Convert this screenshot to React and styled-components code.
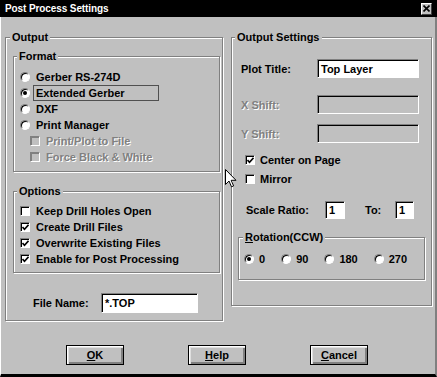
import React from 'react'
import styled, { createGlobalStyle } from 'styled-components'

const GlobalStyle = createGlobalStyle`
  html, body {
    margin: 0;
    padding: 0;
    background: #c0c0c0;
  }
`

const Window = styled.div`
  position: relative;
  width: 437px;
  height: 377px;
  box-sizing: border-box;
  display: flex;
  flex-direction: column;
  background: #c0c0c0;
  font-family: "Liberation Sans", Arial, sans-serif;
  font-weight: bold;
  font-size: 11px;
  color: #000;
  overflow: hidden;
`

const TitleBar = styled.div`
  height: 17px;
  flex-shrink: 0;
  display: flex;
  align-items: center;
  justify-content: space-between;
  padding: 0 5px 0 5px;
  background: #000;
  color: #fff;
  font-size: 10px;
  letter-spacing: -0.1px;
`

const CloseButton = styled.div`
  width: 11px;
  height: 12px;
  box-sizing: border-box;
  display: flex;
  align-items: center;
  justify-content: center;
  background: #c0c0c0;
  border: 1px solid;
  border-color: #fff #404040 #404040 #fff;
`

const Body = styled.div`
  flex: 1;
  display: flex;
  flex-direction: column;
  padding: 20px 0 0 4px;
  border-left: 1px solid #fff;
  border-right: 2px solid #808080;
  border-bottom: 3px solid #000;
`

const Columns = styled.div`
  display: flex;
  align-items: flex-start;
  gap: 8px;
`

const Group = styled.div`
  display: flex;
  flex-direction: column;
  box-sizing: border-box;
  width: ${p => p.$w}px;
  height: ${p => p.$h}px;
  margin: ${p => p.$m || '0'};
  border: 1px solid #808080;
  box-shadow: inset 1px 1px 0 #fff, 1px 1px 0 #fff;
`

const Caption = styled.div`
  align-self: flex-start;
  margin: -8px 0 0 ${p => p.$indent}px;
  padding: 0 2px;
  line-height: 14px;
  background: #c0c0c0;
`

const List = styled.div`
  display: flex;
  flex-direction: column;
  margin-top: ${p => p.$top}px;
`

const Row = styled.div`
  display: flex;
  align-items: center;
  height: 16px;
  padding-left: ${p => p.$indent}px;
  gap: ${p => p.$gap || 6}px;
  margin-top: ${p => p.$top || 0}px;
  color: ${p => (p.$disabled ? '#808080' : '#000')};
  text-shadow: ${p => (p.$disabled ? '1px 1px 0 #fff' : 'none')};
  white-space: nowrap;
`

const Radio = styled.span`
  width: 10px;
  height: 10px;
  flex-shrink: 0;
  box-sizing: border-box;
  display: flex;
  align-items: center;
  justify-content: center;
  border-radius: 50%;
  background: #fff;
  border: 1px solid;
  border-color: #808080 #fff #fff #808080;
  box-shadow: inset 1px 1px 0 #000;

  &::after {
    content: '';
    display: ${p => (p.$on ? 'block' : 'none')};
    width: 4px;
    height: 4px;
    border-radius: 50%;
    background: #000;
  }
`

const Box = styled.span`
  width: 10px;
  height: 10px;
  flex-shrink: 0;
  box-sizing: border-box;
  display: flex;
  align-items: center;
  justify-content: center;
  background: ${p => (p.$disabled ? '#c0c0c0' : '#fff')};
  border: 1px solid;
  border-color: #808080 #fff #fff #808080;
  box-shadow: inset 1px 1px 0 ${p => (p.$disabled ? '#808080' : '#000')};
`

const FocusLabel = styled.span`
  box-sizing: border-box;
  width: 126px;
  height: 16px;
  margin-left: -3px;
  padding-left: 2px;
  display: flex;
  align-items: center;
  border: 1px solid #505050;
`

const FieldRow = styled.div`
  display: flex;
  align-items: center;
  margin-top: ${p => p.$top}px;
  padding-left: ${p => p.$indent}px;
`

const Label = styled.span`
  width: ${p => p.$w}px;
  flex-shrink: 0;
  color: ${p => (p.$disabled ? '#808080' : '#000')};
  text-shadow: ${p => (p.$disabled ? '1px 1px 0 #fff' : 'none')};
  white-space: nowrap;
`

const Input = styled.div`
  width: ${p => p.$w}px;
  height: ${p => p.$h}px;
  flex-shrink: 0;
  box-sizing: border-box;
  display: flex;
  align-items: center;
  padding-left: 3px;
  background: ${p => (p.$disabled ? '#c0c0c0' : '#fff')};
  border: 1px solid;
  border-color: #808080 #fff #fff #808080;
  box-shadow: inset 1px 1px 0 #000;
`

const ButtonRow = styled.div`
  display: flex;
  gap: 64px;
  margin: 24px 0 0 61px;
`

const Button = styled.div`
  width: 58px;
  height: 20px;
  box-sizing: border-box;
  display: flex;
  align-items: center;
  justify-content: center;
  background: #c0c0c0;
  border: 1px solid #000;
  box-shadow: inset 1px 1px 0 #fff, inset 2px 2px 0 #dfdfdf, inset -1px -1px 0 #808080, inset -2px -2px 0 #808080;

  u {
    text-decoration-thickness: 1px;
    text-underline-offset: 1px;
  }
`

const Cursor = styled.svg`
  position: absolute;
  left: 225px;
  top: 169px;
`

const Check = () => (
  <svg width="7" height="7" viewBox="0 0 7 7">
    <path d="M0.5 3 L2.5 5.2 L6.5 0.8" stroke="#000" strokeWidth="1.6" fill="none" />
  </svg>
)

const RadioItem = ({ on, children }) => (
  <Row $indent={6}>
    <Radio $on={on} />
    {children}
  </Row>
)

const CheckItem = ({ on, disabled, indent = 6, gap = 6, top, children }) => (
  <Row $indent={indent} $gap={gap} $disabled={disabled} $top={top}>
    <Box $disabled={disabled}>{on && <Check />}</Box>
    {children}
  </Row>
)

export default function App() {
  return (
    <>
      <GlobalStyle />
      <Window>
        <TitleBar>
          <span>Post Process Settings</span>
          <CloseButton>
            <svg width="7" height="7" viewBox="0 0 7 7">
              <path d="M0.5 0.5 L6.5 6.5 M6.5 0.5 L0.5 6.5" stroke="#000" strokeWidth="1.6" />
            </svg>
          </CloseButton>
        </TitleBar>
        <Body>
          <Columns>
            <Group $w={218} $h={284}>
              <Caption $indent={4}>Output</Caption>
              <Group $w={207} $h={116} $m="12px 0 0 7px">
                <Caption $indent={3}>Format</Caption>
                <List $top={6}>
                  <RadioItem>Gerber RS-274D</RadioItem>
                  <RadioItem on>
                    <FocusLabel>Extended Gerber</FocusLabel>
                  </RadioItem>
                  <RadioItem>DXF</RadioItem>
                  <RadioItem>Print Manager</RadioItem>
                  <CheckItem indent={16} disabled>Print/Plot to File</CheckItem>
                  <CheckItem indent={16} disabled>Force Black &amp; White</CheckItem>
                </List>
              </Group>
              <Group $w={207} $h={82} $m="19px 0 0 7px">
                <Caption $indent={3}>Options</Caption>
                <List $top={5}>
                  <CheckItem>Keep Drill Holes Open</CheckItem>
                  <CheckItem on>Create Drill Files</CheckItem>
                  <CheckItem on>Overwrite Existing Files</CheckItem>
                  <CheckItem on>Enable for Post Processing</CheckItem>
                </List>
              </Group>
              <FieldRow $top={20} $indent={27}>
                <Label $w={68}>File Name:</Label>
                <Input $w={97} $h={20}>*.TOP</Input>
              </FieldRow>
            </Group>

            <Group $w={201} $h={269}>
              <Caption $indent={3}>Output Settings</Caption>
              <FieldRow $top={15} $indent={9}>
                <Label $w={76}>Plot Title:</Label>
                <Input $w={102} $h={19}>Top Layer</Input>
              </FieldRow>
              <FieldRow $top={17} $indent={9}>
                <Label $w={76} $disabled>X Shift:</Label>
                <Input $w={102} $h={19} $disabled />
              </FieldRow>
              <FieldRow $top={10} $indent={9}>
                <Label $w={76} $disabled>Y Shift:</Label>
                <Input $w={102} $h={19} $disabled />
              </FieldRow>
              <CheckItem on indent={13} gap={5} top={9}>Center on Page</CheckItem>
              <CheckItem indent={13} gap={5} top={3}>Mirror</CheckItem>
              <FieldRow $top={14} $indent={14}>
                <Label $w={79}>Scale Ratio:</Label>
                <Input $w={20} $h={18}>1</Input>
                <Label $w={30} style={{ marginLeft: 20 }}>To:</Label>
                <Input $w={19} $h={18}>1</Input>
              </FieldRow>
              <Group $w={187} $h={43} $m="18px 0 0 6px">
                <Caption $indent={4}><u>R</u>otation(CCW)</Caption>
                <List $top={7}>
                  <Row $indent={5} style={{ gap: 0 }}>
                    {['0', '90', '180', '270'].map((v, i) => (
                      <Row key={v} $indent={i === 0 ? 0 : 16} $gap={5}>
                        <Radio $on={i === 0} />
                        {v}
                      </Row>
                    ))}
                  </Row>
                </List>
              </Group>
            </Group>
          </Columns>

          <ButtonRow>
            <Button><span><u>O</u>K</span></Button>
            <Button><span><u>H</u>elp</span></Button>
            <Button><span><u>C</u>ancel</span></Button>
          </ButtonRow>
        </Body>

        <Cursor width="12" height="19" viewBox="0 0 12 19">
          <path d="M0.5 0.5 L0.5 15.5 L4 12 L6.5 17.8 L8.6 16.9 L6.2 11.3 L11 11.3 Z" fill="#fff" stroke="#000" strokeWidth="1" />
        </Cursor>
      </Window>
    </>
  )
}
